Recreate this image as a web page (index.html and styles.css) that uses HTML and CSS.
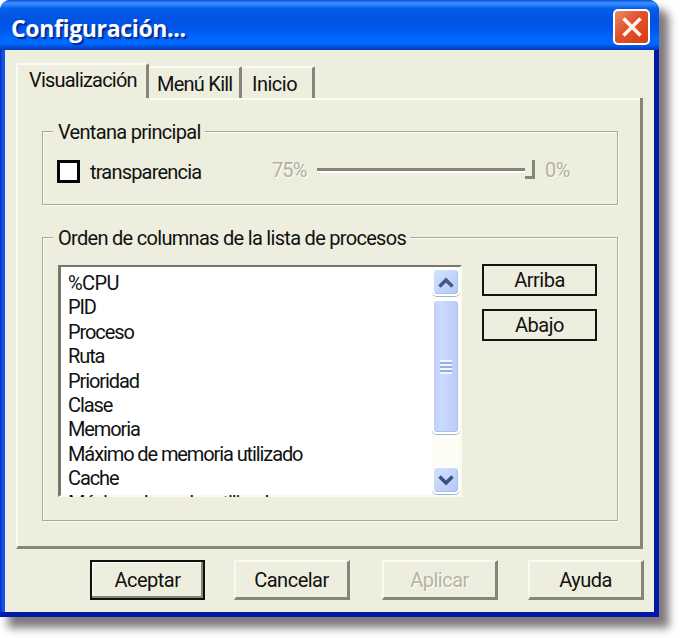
FILE: index.html
```html
<!DOCTYPE html>
<html lang="es">
<head>
    <meta charset="UTF-8">
    <meta name="viewport" content="width=device-width, initial-scale=1.0">
    <title>Configuración</title>
    <link rel="stylesheet" href="styles.css">
</head>
<body>
    <div class="window">
        <div class="titlebar">
            <h1>Configuración...</h1>
            <button class="close" aria-label="Cerrar">
                <svg width="20" height="20" viewBox="0 0 20 20"><path d="M1.5 1.5L18.5 18.5M18.5 1.5L1.5 18.5" stroke="#fff8ea" stroke-width="3.6"/></svg>
            </button>
        </div>
        <div class="client">
            <div class="tabs">
                <div class="tab active"><span>Visualización</span></div>
                <div class="tab kill"><span>Menú Kill</span></div>
                <div class="tab inicio"><span>Inicio</span></div>
            </div>
            <div class="page">
                <div class="group main-window">
                    <div class="group-title title-main">Ventana principal</div>
                    <div class="row">
                        <div class="checkbox"></div>
                        <span class="check-label">transparencia</span>
                        <span class="disabled min">75%</span>
                        <div class="track"></div>
                        <div class="thumb"></div>
                        <span class="disabled max">0%</span>
                    </div>
                </div>
                <div class="group columns">
                    <div class="group-title title-columns">Orden de columnas de la lista de procesos</div>
                    <div class="columns-body">
                        <div class="listbox">
                            <ul>
                                <li>%CPU</li>
                                <li>PID</li>
                                <li>Proceso</li>
                                <li>Ruta</li>
                                <li>Prioridad</li>
                                <li>Clase</li>
                                <li>Memoria</li>
                                <li>Máximo de memoria utilizado</li>
                                <li>Cache</li>
                                <li>Máximo de cache utilizado</li>
                            </ul>
                            <div class="scrollbar">
                                <div class="arrow">
                                    <svg width="16" height="11" viewBox="0 0 16 11"><path d="M1.5 9.5L8 3L14.5 9.5" fill="none" stroke="#465a86" stroke-width="3.6"/></svg>
                                </div>
                                <div class="handle"><i></i></div>
                                <div class="arrow down">
                                    <svg width="16" height="11" viewBox="0 0 16 11"><path d="M1.5 1.5L8 8L14.5 1.5" fill="none" stroke="#3b527f" stroke-width="3.6"/></svg>
                                </div>
                            </div>
                        </div>
                        <div class="order-buttons">
                            <button class="flat">Arriba</button>
                            <button class="flat">Abajo</button>
                        </div>
                    </div>
                </div>
            </div>
            <div class="buttons">
                <button class="btn default">Aceptar</button>
                <button class="btn cancel">Cancelar</button>
                <button class="btn off" disabled>Aplicar</button>
                <button class="btn">Ayuda</button>
            </div>
        </div>
    </div>
</body>
</html>
```
FILE: styles.css
```css
* {
    box-sizing: border-box;
}
body {
    height: 638px;
    margin: 0;
    background: #fff;
    color: #111;
    font-family: Roboto, "Liberation Sans", sans-serif;
    font-size: 20px;
    line-height: 24px;
    letter-spacing: -0.5px;
    overflow: hidden;
}
button {
    padding: 0;
    color: inherit;
    font: inherit;
    letter-spacing: inherit;
    background: #edeedd;
}
.window {
    width: 659px;
    height: 617px;
    border-bottom: 5px solid #0019a4;
    background: linear-gradient(90deg, #0030c8, #1660ee 4px, #0840d0 5px, #0840d0 50%, #0019a0 99%);
    border-radius: 10px 10px 0 0;
    box-shadow: 9px 10px 9px 1px rgba(60, 50, 60, 0.65);
}
.titlebar {
    display: flex;
    justify-content: space-between;
    height: 50px;
    padding: 9px 9px 0 11px;
    border-radius: 10px 10px 0 0;
    background: linear-gradient(#0a4fd0, #3b92ff 3px, #2b83fb 5px, #0560ea 8px, #0052e2 20px, #0058f0 30px, #0068ff 38px, #0068ff 44px, #0040c4 49px, #003cb8);
}
h1 {
    margin: 5px 0 0;
    color: #fff;
    font: bold 23px/28px "Open Sans", "Noto Sans", sans-serif;
    letter-spacing: -0.35px;
    text-shadow: 2px 2px 1px #0a2a90;
}
.close {
    display: flex;
    align-items: center;
    justify-content: center;
    width: 37px;
    height: 36px;
    border: 2px solid #fff;
    border-radius: 5px;
    background: linear-gradient(135deg, #e98a6c, #e0512c 45%, #d63e12);
}
.client {
    height: 562px;
    margin: 0 5px;
    padding: 13px 10px 0 11px;
    background: #edeedd;
}
.tabs {
    display: flex;
    align-items: flex-end;
    height: 35px;
}
.tab {
    height: 32px;
    padding-top: 4px;
    border-top: 2px solid #fbfbf3;
    border-right: 3px solid #85857a;
    border-radius: 3px 2px 0 0;
}
.tab.active {
    width: 133px;
    height: 35px;
    padding: 3px 0 0 11px;
    border-left: 2px solid #fbfbf3;
    letter-spacing: -0.8px;
}
.tab.kill {
    width: 93px;
    padding-left: 8px;
    letter-spacing: -0.75px;
}
.tab.inicio {
    width: 73px;
    padding-left: 10px;
}
.page {
    width: 627px;
    height: 451px;
    padding: 33px 23px 0 24px;
    border: 2px solid #fbfbf3;
    border-top: 0;
    border-right: 3px solid #85857a;
    border-bottom: 3px solid #85857a;
    background: linear-gradient(#fbfbf3, #fbfbf3) no-repeat 132px 0 / 100% 2px;
}
.group {
    width: 576px;
    border: 1px solid #a9a99a;
    box-shadow: 1px 1px 0 #fafaf0, inset 1px 1px 0 #fafaf0;
}
.main-window {
    height: 74px;
}
.columns {
    height: 284px;
    margin-top: 32px;
}
.group-title {
    width: max-content;
    margin: -12px 0 0 10px;
    padding: 0 4px 0 5px;
    background: #edeedd;
    letter-spacing: -0.7px;
}
.row {
    display: flex;
    align-items: center;
    height: 24px;
    margin: 15px 0 0 14px;
}
.checkbox {
    width: 23px;
    height: 23px;
    border: 3px solid #050505;
    background: #fff;
}
.check-label {
    position: relative;
    top: 1px;
    width: 182px;
    margin-left: 10px;
    letter-spacing: -0.8px;
}
.disabled {
    position: relative;
    top: -1px;
    color: #b0b1a2;
    text-shadow: 1px 1px 0 #fffff4;
}
.min {
    width: 45px;
    letter-spacing: -0.9px;
}
.track {
    width: 208px;
    height: 5px;
    margin-top: -1px;
    border-top: 3px solid #85827a;
    border-bottom: 2px solid #fff;
}
.thumb {
    width: 10px;
    height: 19px;
    margin: -3px 10px 0 0;
    border-right: 3px solid #85857a;
    border-bottom: 3px solid #85857a;
}
.columns-body {
    display: flex;
    gap: 20px;
    margin: 15px 0 0 15px;
}
.listbox {
    display: flex;
    width: 404px;
    height: 232px;
    border: 2px solid #77776c;
    border-left-width: 3px;
    border-right-color: #fafaf0;
    border-bottom-color: #fafaf0;
    background: #fff;
}
ul {
    flex: 1;
    margin: 0 0 -2px;
    padding: 4px 0 0 7px;
    list-style: none;
    letter-spacing: -1.1px;
    overflow: hidden;
}
li {
    height: 24.4px;
    white-space: nowrap;
}
li:first-child {
    letter-spacing: -0.6px;
}
.scrollbar {
    display: flex;
    flex-direction: column;
    width: 28px;
    padding-top: 1px;
    background: #fdfcf5;
}
.arrow,
.handle {
    display: flex;
    align-items: center;
    justify-content: center;
    height: 28px;
    border: 2px solid #fff;
    border-radius: 5px;
    background: linear-gradient(135deg, #d5e2ff, #b4c8f6);
    box-shadow: inset -1px -1px 0 #a9c0ec, 0 1px 0 #9db5d5;
}
.handle {
    height: 135px;
    margin: 3px 0 32px;
    background: linear-gradient(90deg, #bfd0fb, #ccdaff 30%, #b9cbf9);
}
.handle i {
    width: 12px;
    height: 14px;
    background: repeating-linear-gradient(#f2f6ff 0 2px, #91aee8 2px 4px);
}
.order-buttons {
    display: flex;
    flex-direction: column;
    gap: 13px;
    margin-top: -1px;
}
.flat {
    width: 115px;
    height: 32px;
    border: 2px solid #151510;
}
.buttons {
    display: flex;
    gap: 30px;
    width: 554px;
    margin: 11px 0 0 74px;
}
.btn {
    width: 116px;
    height: 40px;
    border: 2px solid #fafaf2;
    border-right: 3px solid #85857a;
    border-bottom: 3px solid #85857a;
}
.btn.default {
    width: 115px;
    border: 2px solid #10100c;
    box-shadow: inset -2px -2px 0 #85857a, inset 1px 1px 0 #fafaf2;
}
.btn.cancel {
    margin: 0 2px 0 -1px;
}
.btn.off {
    color: #b3b4a6;
    text-shadow: 1px 1px 0 #fffff4;
}
```
